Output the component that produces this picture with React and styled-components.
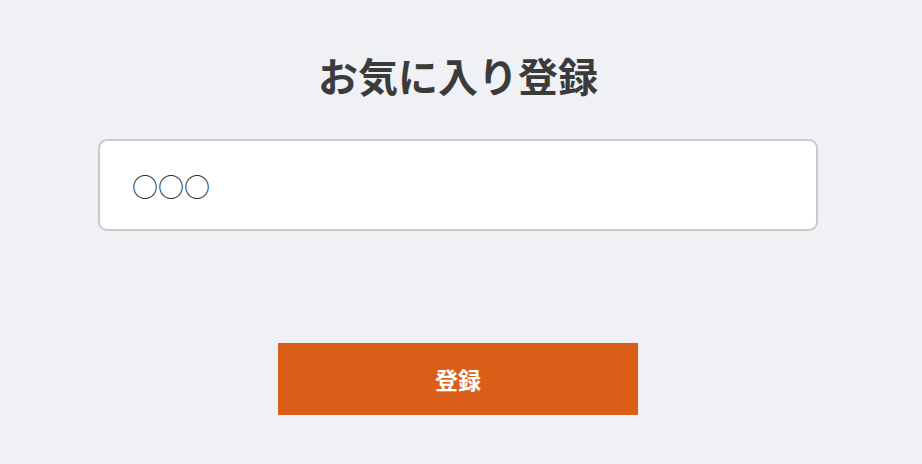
import React from "react";
import styled, { createGlobalStyle } from "styled-components";

const Global = createGlobalStyle`
  html, body { margin: 0; padding: 0; background: #f0f1f5; }
  body { font-family: "Noto Sans CJK JP", "Noto Sans", sans-serif; }
`;

const Page = styled.main`
  width: 916px;
  display: flex;
  flex-direction: column;
  align-items: center;
  padding-top: 49px;
`;

const Title = styled.h1`
  margin: 0;
  font-size: 40px;
  line-height: 52px;
  font-weight: 700;
  color: #3b3b3b;
  letter-spacing: 0;
`;

const Field = styled.input`
  box-sizing: border-box;
  margin-top: 38px;
  width: 720px;
  height: 92px;
  border: 2px solid #c9c9c9;
  border-radius: 9px;
  background: #fff;
  padding: 0 32px;
  font-family: "Noto Sans CJK JP", sans-serif;
  font-size: 26px;
  color: #333;
  outline: none;
`;

const Submit = styled.button`
  margin-top: 112px;
  width: 360px;
  height: 72px;
  border: none;
  background: #db5e18;
  color: #fff;
  font-family: "Noto Sans CJK JP", sans-serif;
  font-size: 23px;
  font-weight: 700;
  cursor: pointer;
`;

export default function App() {
  return (
    <>
      <Global />
      <Page>
        <Title>お気に入り登録</Title>
        <Field defaultValue="○○○" />
        <Submit>登録</Submit>
      </Page>
    </>
  );
}
